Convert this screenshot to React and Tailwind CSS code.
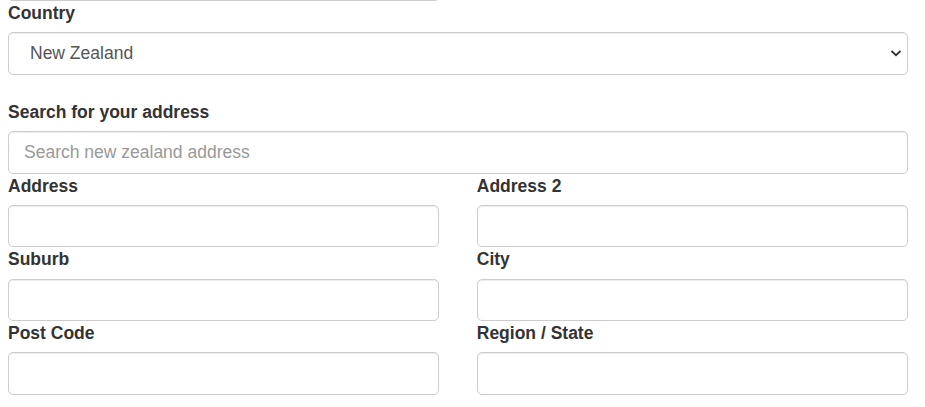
import React from 'react';

const font = { fontFamily: '"Liberation Sans", Arial, sans-serif' };

const inputCls =
  'block w-full h-[42.5px] px-[15px] border-[1.25px] border-[#ccc] rounded-[5px] bg-white text-[17.5px] text-[#555] shadow-[inset_0_1px_1px_rgba(0,0,0,0.075)] outline-none placeholder:text-[#999]';

const labelCls = 'block text-[17.5px] leading-[25px] font-bold text-[#333] mb-[6.25px]';

const Field = ({ label }) => (
  <div>
    <label className={labelCls}>{label}</label>
    <input type="text" className={inputCls} />
  </div>
);

const App = () => {
  return (
    <div className="w-[925px] h-[407px] overflow-hidden bg-white" style={font}>
      <div className="px-[8px] w-[916px]">
        {/* bottom edge of the field above */}
        <div className="w-[431px] h-[8px] -mt-[7px] border-[1.25px] border-[#ccc] rounded-[5px]" />

        <div className="pt-[0px]">
          <label className={labelCls}>Country</label>
          <div className="relative">
            <select
              defaultValue="nz"
              className={`${inputCls} appearance-none pl-[21px]`}
            >
              <option value="nz">New Zealand</option>
              <option value="au">Australia</option>
            </select>
            <svg
              className="absolute right-[6px] top-[16px] pointer-events-none"
              width="12"
              height="10"
              viewBox="0 0 12 10"
            >
              <path d="M1.5 3 L6 7.2 L10.5 3" fill="none" stroke="#333" strokeWidth="1.8" />
            </svg>
          </div>
        </div>

        <div className="mt-[25px]">
          <label className={labelCls}>Search for your address</label>
          <input type="text" placeholder="Search new zealand address" className={inputCls} />
        </div>

        <div className="grid grid-cols-2 gap-x-[37.5px]">
          <Field label="Address" />
          <Field label="Address 2" />
          <Field label="Suburb" />
          <Field label="City" />
          <Field label="Post Code" />
          <Field label="Region / State" />
        </div>
      </div>
    </div>
  );
};

export default App;
